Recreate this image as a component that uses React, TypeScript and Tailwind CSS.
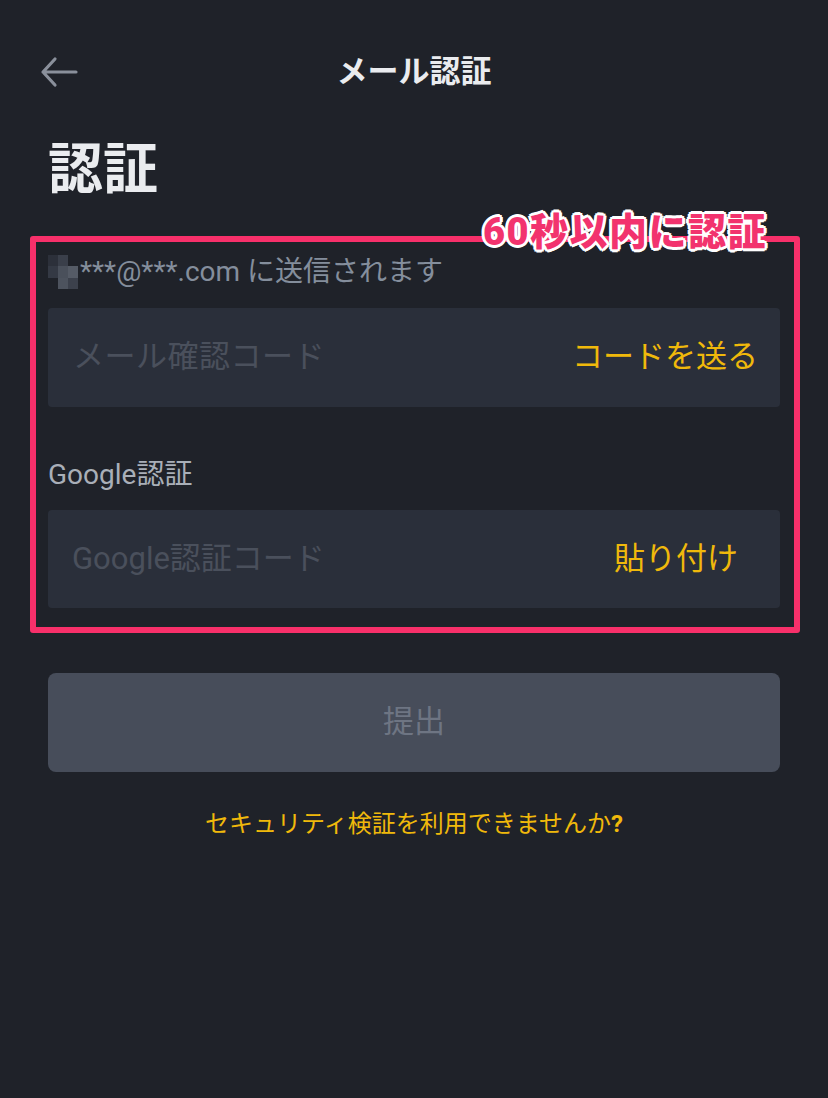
import React from "react";

const font = "font-['Roboto','Noto_Sans_CJK_JP',sans-serif]";

export default function App() {
  return (
    <div className={`min-h-[1098px] w-full bg-[#1f2229] ${font} pt-[40px]`}>
      {/* Header */}
      <div className="grid h-[64px] grid-cols-[1fr_auto_1fr] items-center px-[40px]">
        <div className="flex items-center">
          <svg width="38" height="32" viewBox="0 0 38 32" fill="none">
            <path
              d="M36 16H3M15 3L3 16L15 29"
              stroke="#8a909b"
              strokeWidth="3.2"
              strokeLinecap="round"
              strokeLinejoin="round"
            />
          </svg>
        </div>
        <div className="text-[31px] font-semibold leading-[40px] text-[#eaecef]">メール認証</div>
        <div />
      </div>

      <div className="px-[48px]">
        <h1 className="mt-[33px] text-[55px] font-bold leading-[64px] text-[#eaecef]">認証</h1>

        {/* Annotated box */}
        <div className="relative ml-[-18px] mr-[-20px] mt-[35px] rounded-[3px] border-[6px] border-[#f7306a] pb-[19px] pl-[12px] pr-[14px] pt-[14px]">
          <div className="absolute right-[27px] top-[-30px] text-[38px] font-black leading-[40px] tracking-[1.5px] text-[#f2336e] [text-shadow:2px_0_0_#fff,-2px_0_0_#fff,0_2px_0_#fff,0_-2px_0_#fff,2px_2px_0_#fff,-2px_-2px_0_#fff,2px_-2px_0_#fff,-2px_2px_0_#fff,3px_0_0_#fff,-3px_0_0_#fff,0_3px_0_#fff,0_-3px_0_#fff,0_0_3px_#000]">
            60秒以内に認証
          </div>

          <div className="flex h-[32px] items-center text-[28px] leading-[32px] text-[#848e9c]">
            <div className="mr-[2px] grid h-[34px] w-[30px] grid-cols-3 grid-rows-3">
              <div className="bg-[#2c303a]" />
              <div className="bg-[#3a3f4a]" />
              <div className="bg-[#1f2229]" />
              <div className="bg-[#343944]" />
              <div className="bg-[#4a505b]" />
              <div className="bg-[#555b66]" />
              <div className="bg-[#1f2229]" />
              <div className="bg-[#4d535e]" />
              <div className="bg-[#3c414c]" />
            </div>
            <span>***@***.com に送信されます</span>
          </div>

          <div className="mt-[20px] flex h-[99px] items-center justify-between rounded-[4px] bg-[#2a2f3a] pl-[25px] pr-[22px]">
            <span className="text-[31px] tracking-[0.5px] text-[#4a505c]">メール確認コード</span>
            <span className="text-[31px] text-[#f0b90b]">コードを送る</span>
          </div>

          <div className="mt-[52px] text-[28px] leading-[32px] text-[#a9afb8]">Google認証</div>

          <div className="mt-[19px] flex h-[98px] items-center justify-between rounded-[4px] bg-[#2a2f3a] pl-[24px] pr-[42px]">
            <span className="text-[31px] text-[#4a505c]">Google認証コード</span>
            <span className="text-[31px] text-[#f0b90b]">貼り付け</span>
          </div>
        </div>

        <button className="mt-[40px] flex h-[99px] w-full items-center justify-center rounded-[8px] bg-[#474d5a] text-[31px] text-[#6e7583]">
          提出
        </button>

        <div className="mt-[36px] text-center text-[24px] leading-[32px] text-[#f0b90b]">
          セキュリティ検証を利用できませんか<span className="font-bold">?</span>
        </div>
      </div>
    </div>
  );
}
